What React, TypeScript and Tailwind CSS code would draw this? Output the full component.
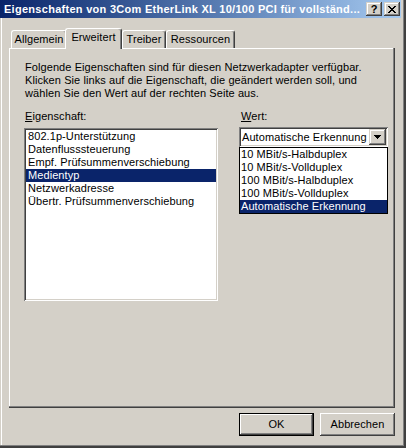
const raised = 'shadow-[inset_-1px_-1px_#404040,inset_1px_1px_#ffffff,inset_-2px_-2px_#808080]'
const capBtn =
  'shadow-[inset_-1px_-1px_#404040,inset_1px_1px_#d4d0c8,inset_-2px_-2px_#808080,inset_2px_2px_#ffffff]'
const sunken =
  'shadow-[inset_1px_1px_#808080,inset_-1px_-1px_#ffffff,inset_2px_2px_#404040,inset_-2px_-2px_#d4d0c8]'

const tabBase =
  'flex justify-center pt-[2px] border-l border-t border-r border-l-white border-t-white border-r-[#404040] rounded-t-[3px] shadow-[inset_-1px_0_#808080] bg-[#d4d0c8]'

const properties = [
  '802.1p-Unterstützung',
  'Datenflusssteuerung',
  'Empf. Prüfsummenverschiebung',
  'Medientyp',
  'Netzwerkadresse',
  'Übertr. Prüfsummenverschiebung',
]

const values = [
  '10 MBit/s-Halbduplex',
  '10 MBit/s-Vollduplex',
  '100 MBit/s-Halbduplex',
  '100 MBit/s-Vollduplex',
  'Automatische Erkennung',
]

function CloseGlyph() {
  return (
    <svg width="8" height="7" viewBox="0 0 8 7" shapeRendering="crispEdges">
      <path
        d="M0 0h2v1H0zM6 0h2v1H6zM1 1h2v1H1zM5 1h2v1H5zM2 2h4v1H2zM3 3h2v1H3zM2 4h4v1H2zM1 5h2v1H1zM5 5h2v1H5zM0 6h2v1H0zM6 6h2v1H6z"
        fill="#000"
      />
    </svg>
  )
}

function ArrowGlyph() {
  return (
    <svg width="7" height="4" viewBox="0 0 7 4" shapeRendering="crispEdges">
      <path d="M0 0h7v1H0zM1 1h5v1H1zM2 2h3v1H2zM3 3h1v1H3z" fill="#000" />
    </svg>
  )
}

export default function App() {
  return (
    <div className="w-[406px] h-[448px] border-r-2 border-b-2 border-[#404040] bg-[#d4d0c8] font-['Liberation_Sans',Arial,sans-serif] text-[11px] leading-[13px] text-black select-none">
      <div className="h-full border-r border-b border-[#808080] flex flex-col">
        {/* title bar */}
        <div className="w-[401px] h-[18px] shrink-0 flex items-center bg-linear-to-r from-[#0a246a] to-[#a6caf0] pl-[4px] pr-[1px]">
          <div className="flex-1 mt-px whitespace-nowrap overflow-hidden font-bold text-white tracking-[0.28px]">
            Eigenschaften von 3Com EtherLink XL 10/100 PCI für vollständ...
          </div>
          <div className={`w-[16px] h-[14px] flex items-center justify-center bg-[#d4d0c8] font-bold text-[11px] leading-none ${capBtn}`}>
            ?
          </div>
          <div className={`w-[16px] h-[14px] ml-[2px] flex items-center justify-center bg-[#d4d0c8] ${capBtn}`}>
            <CloseGlyph />
          </div>
        </div>

        {/* body */}
        <div className="flex-1 ml-px border-l border-white flex flex-col tracking-[0.08px]">
          {/* tabs */}
          <div className="h-[20px] mt-[10px] ml-[9px] flex items-end">
            <div className={`${tabBase} w-[56px] h-[18px]`}>Allgemein</div>
            <div className={`${tabBase} relative z-10 -ml-[2px] -mb-px w-[57px] h-[21px]`}>Erweitert</div>
            <div className={`${tabBase} w-[44px] h-[18px]`}>Treiber</div>
            <div className={`${tabBase} w-[69px] h-[18px]`}>Ressourcen</div>
          </div>

          {/* panel */}
          <div className="h-[360px] ml-[7px] mr-[8px] pt-[13px] pl-[15px] pr-[7px] shadow-[inset_-1px_-1px_#404040,inset_-2px_-2px_#808080,inset_1px_1px_#ffffff]">
            <p className="pl-px whitespace-nowrap">
              Folgende Eigenschaften sind für diesen Netzwerkadapter verfügbar.
              <br />
              Klicken Sie links auf die Eigenschaft, die geändert werden soll, und
              <br />
              wählen Sie den Wert auf der rechten Seite aus.
            </p>

            <div className="mt-[10px] flex gap-[21px]">
              <div className="w-[194px] shrink-0">
                <div className="pl-px">
                  <span className="underline">E</span>igenschaft:
                </div>
                <div className={`mt-[5px] h-[173px] bg-white p-[2px] ${sunken}`}>
                  {properties.map((p) => (
                    <div
                      key={p}
                      className={`h-[13px] pl-[2px] whitespace-nowrap ${
                        p === 'Medientyp' ? 'bg-[#0a246a] text-white' : ''
                      }`}
                    >
                      {p}
                    </div>
                  ))}
                </div>
              </div>

              <div className="w-[149px] shrink-0">
                <div className="pl-[2px]">
                  <span className="underline">W</span>ert:
                </div>
                <div className={`mt-[4px] h-[20px] bg-white p-[2px] flex items-center ${sunken}`}>
                  <div className="flex-1 pl-[1px] whitespace-nowrap">Automatische Erkennung</div>
                  <div className={`w-[17px] h-[16px] bg-[#d4d0c8] flex items-center justify-center ${capBtn}`}>
                    <ArrowGlyph />
                  </div>
                </div>
                <div className="border border-black bg-white">
                  {values.map((v) => (
                    <div
                      key={v}
                      className={`h-[13px] pl-px whitespace-nowrap ${
                        v === 'Automatische Erkennung' ? 'bg-[#0a246a] text-white' : ''
                      }`}
                    >
                      {v}
                    </div>
                  ))}
                </div>
              </div>
            </div>
          </div>

          {/* buttons */}
          <div className="mt-[5px] mr-[8px] flex justify-end gap-[6px]">
            <div className="w-[75px] h-[23px] border border-black">
              <div className={`h-full flex items-center justify-center ${raised}`}>OK</div>
            </div>
            <div className={`w-[75px] h-[23px] flex items-center justify-center ${raised}`}>Abbrechen</div>
          </div>
        </div>
      </div>
    </div>
  )
}
